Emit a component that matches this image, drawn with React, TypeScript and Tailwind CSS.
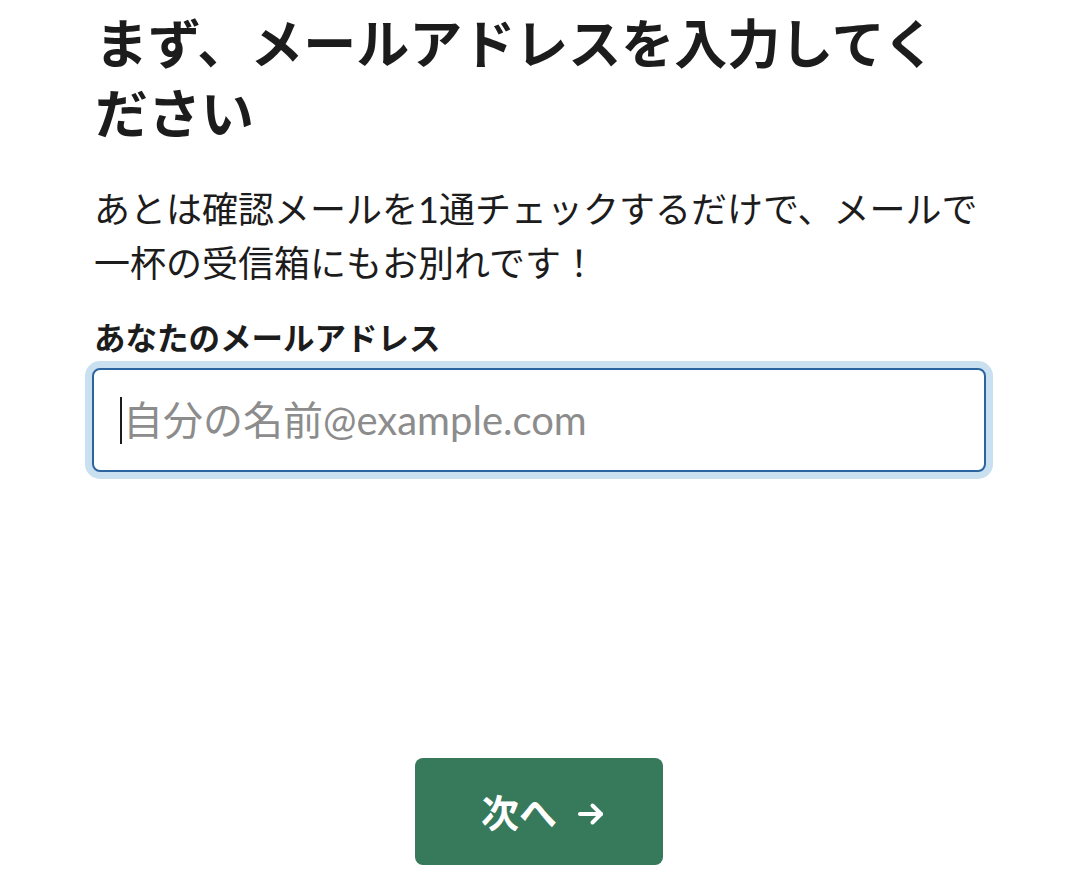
import React from "react";

export default function App() {
  const font = { fontFamily: "Lato, 'Noto Sans CJK JP', sans-serif" };
  return (
    <div className="w-[1066px] h-[888px] bg-white overflow-hidden" style={font}>
      <div className="ml-[92px] w-[894px] flex flex-col">
        <h1 className="mt-[9px] ml-[3px] text-[53px] leading-[70px] font-bold text-[#1d1c1d] whitespace-nowrap">
          まず、メールアドレスを入力してく
          <br />
          ださい
        </h1>
        <p className="mt-[33px] ml-[2px] text-[36px] leading-[54px] text-[#1d1c1d] whitespace-nowrap">
          あとは確認メールを1通チェックするだけで、メールで
          <br />
          一杯の受信箱にもお別れです！
        </p>
        <label className="mt-[28px] ml-[2px] text-[31.5px] leading-[40px] font-bold text-[#1d1c1d] whitespace-nowrap">
          あなたのメールアドレス
        </label>
        <div className="relative mt-[10px]">
          <input
            type="email"
            placeholder="自分の名前@example.com"
            className="w-full h-[104px] rounded-[8px] border-2 border-[#2c64a0] bg-white pl-[29px] pr-4 text-[40px] text-[#1d1c1d] placeholder:text-[#8c8c8c] outline-none caret-transparent shadow-[0_0_0_7px_#c8e0f0]"
            style={font}
          />
          <span className="absolute left-[28px] top-[29px] w-[2px] h-[47px] bg-[#1d1c1d]" />
        </div>
        <div className="flex justify-center mt-[286px]">
          <button className="w-[248px] h-[107px] rounded-[8px] bg-[#36795b] text-white flex items-center justify-center gap-[20px] pl-[8px]">
            <span className="text-[38px] font-bold leading-none">次へ</span>
            <svg width="28" height="24" viewBox="0 0 28 24" fill="none" stroke="white" strokeWidth="4" strokeLinecap="round" strokeLinejoin="round" className="mt-[4px]">
              <path d="M3 12h21" />
              <path d="M15.5 3.5L24 12l-8.5 8.5" />
            </svg>
          </button>
        </div>
      </div>
    </div>
  );
}
